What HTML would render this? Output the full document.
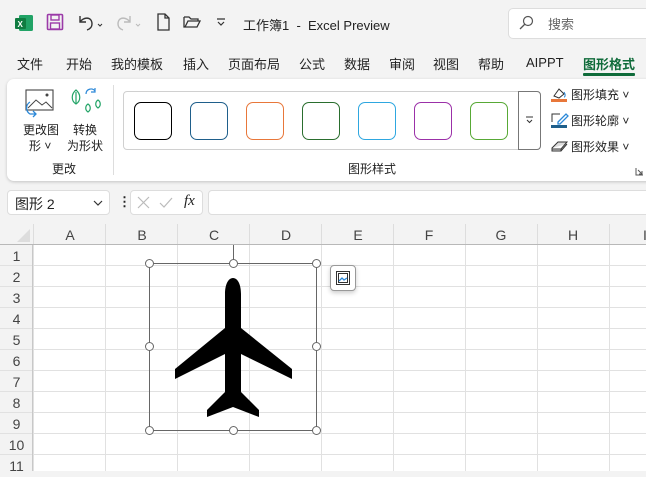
<!DOCTYPE html>
<html><head><meta charset="utf-8"><style>
*{margin:0;padding:0;box-sizing:border-box}
body{width:646px;height:471px;overflow:hidden;background:#f3f3f3;font-family:"Liberation Sans","Noto Sans CJK SC",sans-serif;color:#222;position:relative;font-size:13px}
.a{position:absolute;white-space:nowrap}
.tab{top:54px;font-size:13px}
.sb{position:absolute;top:102px;width:38px;height:38px;border-radius:7px;border:1.3px solid}
.col{position:absolute;top:225px;height:20px;font-size:14px;color:#444;text-align:center;width:72px;line-height:20px}
.row{position:absolute;left:0;width:33px;text-align:center;font-size:14px;color:#444;height:21px;line-height:21px}
.h{position:absolute;width:9px;height:9px;border-radius:50%;border:1.5px solid #666;background:#fff}
</style></head><body>
<svg class="a" style="left:14px;top:13px" width="20" height="20"><rect x="5" y="2" width="14" height="16" rx="1.5" fill="#21a366"/><rect x="1" y="5" width="11" height="11" rx="1" fill="#107c41"/><text x="3.5" y="14" font-size="8" fill="#fff" font-family="Liberation Sans" font-weight="bold">X</text></svg>
<svg class="a" style="left:46px;top:13px" width="18" height="18"><rect x="1.5" y="1.5" width="15" height="15" rx="1" fill="none" stroke="#9b3aa8" stroke-width="1.6"/><rect x="5" y="2" width="8" height="5" fill="none" stroke="#9b3aa8" stroke-width="1.4"/><rect x="4.5" y="10" width="9" height="6" fill="none" stroke="#9b3aa8" stroke-width="1.4"/></svg>
<svg class="a" style="left:76px;top:12px" width="30" height="20"><path d="M4 4v6h6M4 10c3-5 12-6 12 2 0 3-2 5-5 6" fill="none" stroke="#333" stroke-width="1.4"/><path d="M22 12l2 2 2-2" fill="none" stroke="#333"/></svg>
<svg class="a" style="left:114px;top:12px" width="30" height="20"><path d="M16 4v6h-6M16 10c-3-5-12-6-12 2 0 3 2 5 5 6" fill="none" stroke="#bbb" stroke-width="1.4"/><path d="M22 12l2 2 2-2" fill="none" stroke="#bbb"/></svg>
<svg class="a" style="left:156px;top:13px" width="16" height="18"><path d="M2 1h7l4 4v12H2z M9 1v4h4" fill="none" stroke="#333" stroke-width="1.3"/></svg>
<svg class="a" style="left:183px;top:15px" width="20" height="14"><path d="M1 2h5l2 2h7v2M1 2v10h13l3-6H5l-3 6" fill="none" stroke="#333" stroke-width="1.3"/></svg>
<svg class="a" style="left:215px;top:17px" width="12" height="10"><path d="M2 2h8M3 5l3 3 3-3" fill="none" stroke="#333" stroke-width="1.2"/></svg>
<div class="a" style="left:243px;top:15px;font-size:13px">工作簿1&nbsp; - &nbsp;Excel Preview</div>
<div class="a" style="left:508px;top:8px;width:150px;height:31px;background:#fff;border:1px solid #ddd;border-radius:5px"></div>
<svg class="a" style="left:518px;top:15px" width="16" height="16"><circle cx="10" cy="6" r="4.5" fill="none" stroke="#555" stroke-width="1.2"/><path d="M7 9l-5 5" stroke="#555" stroke-width="1.3"/></svg>
<div class="a" style="left:548px;top:14px;color:#666;font-size:13px">搜索</div>
<div class="a tab" style="left:17px">文件</div><div class="a tab" style="left:66px">开始</div><div class="a tab" style="left:111px">我的模板</div><div class="a tab" style="left:183px">插入</div><div class="a tab" style="left:228px">页面布局</div><div class="a tab" style="left:299px">公式</div><div class="a tab" style="left:344px">数据</div><div class="a tab" style="left:389px">审阅</div><div class="a tab" style="left:433px">视图</div><div class="a tab" style="left:478px">帮助</div><div class="a tab" style="left:526px;top:55px">AIPPT</div>
<div class="a tab" style="left:583px;color:#0f6b3a;font-weight:bold">图形格式</div>
<div class="a" style="left:583px;top:73px;width:52px;height:3px;background:#0f6b3a;border-radius:1px"></div>
<div class="a" style="left:7px;top:79px;width:660px;height:102px;background:#fff;border-radius:7px;box-shadow:0 1px 3px rgba(0,0,0,.2)"></div>
<svg class="a" style="left:22px;top:88px" width="36" height="32"><rect x="4" y="2" width="27" height="20" fill="none" stroke="#444" stroke-width="1.1"/><path d="M6 20l8-8 6 5 4-3 6 6" fill="none" stroke="#444"/><circle cx="25" cy="7" r="1.5" fill="#444"/><path d="M8 14a7 7 0 0 0 0 12h6M11 23l3 3-3 3" fill="none" stroke="#2b88d8" stroke-width="1.3"/></svg>
<div class="a" style="left:23px;top:121px;font-size:12px">更改图</div>
<div class="a" style="left:29px;top:137px;font-size:12px">形 ˅</div>
<svg class="a" style="left:68px;top:86px" width="36" height="32"><path d="M8 4c-5 4-5 11 0 14 5-3 5-10 0-14zM8 6v12" fill="none" stroke="#21a366" stroke-width="1.2"/><path d="M18 8a5 5 0 0 1 9-3M27 2v4h-4" fill="none" stroke="#2b88d8" stroke-width="1.2"/><path d="M20 18c-3 2-3 6 0 8 3-2 3-6 0-8zM30 14c-3 2-3 6 0 8 3-2 3-6 0-8z" fill="none" stroke="#21a366" stroke-width="1.2"/></svg>
<div class="a" style="left:73px;top:121px;font-size:12px">转换</div>
<div class="a" style="left:67px;top:137px;font-size:12px">为形状</div>
<div class="a" style="left:52px;top:160px;font-size:12px">更改</div>
<div class="a" style="left:113px;top:85px;width:1px;height:90px;background:#ddd"></div>
<div class="a" style="left:123px;top:91px;width:418px;height:59px;border:1px solid #d0d0d0;border-radius:4px"></div>
<div class="a" style="left:518px;top:91px;width:23px;height:59px;border:1px solid #777;border-radius:0 4px 4px 0;background:#fff"></div>
<svg class="a" style="left:524px;top:115px" width="12" height="10"><path d="M2 2h7M3 5l2.5 2.5L8 5" fill="none" stroke="#333"/></svg>
<div class="sb" style="left:134px;border-color:#000"></div><div class="sb" style="left:190px;border-color:#1f5f8b"></div><div class="sb" style="left:246px;border-color:#e8773a"></div><div class="sb" style="left:302px;border-color:#2a6e2e"></div><div class="sb" style="left:358px;border-color:#2ea7e0"></div><div class="sb" style="left:414px;border-color:#9b30a8"></div><div class="sb" style="left:470px;border-color:#58a936"></div>
<div class="a" style="left:348px;top:160px;font-size:12px">图形样式</div>
<svg class="a" style="left:550px;top:86px" width="20" height="18"><path d="M4 10l5-7 5 5-5 4z" fill="none" stroke="#333"/><path d="M14 6c2 3 1 5 0 5" fill="none" stroke="#2b88d8"/><rect x="1" y="13" width="16" height="3" fill="#e8773a"/></svg>
<div class="a" style="left:571px;top:86px;font-size:12px">图形填充 ˅</div>
<svg class="a" style="left:550px;top:111px" width="20" height="18"><path d="M2 11V3h8" fill="none" stroke="#333"/><path d="M8 11l8-8 2 2-8 8h-2z" fill="none" stroke="#2b88d8" stroke-width="1.3"/><rect x="1" y="14" width="16" height="3" fill="#1f5f8b"/></svg>
<div class="a" style="left:571px;top:112px;font-size:12px">图形轮廓 ˅</div>
<svg class="a" style="left:550px;top:138px" width="20" height="16"><path d="M2 10l6-6h9l-6 7H2zM2 10v3h9l6-7M11 11v2" fill="#ddd" stroke="#333"/></svg>
<div class="a" style="left:571px;top:138px;font-size:12px">图形效果 ˅</div>
<svg class="a" style="left:635px;top:167px" width="9" height="9"><path d="M1 1v7h7M3 3l4 4M7 4v3H4" fill="none" stroke="#555"/></svg>
<div class="a" style="left:7px;top:190px;width:103px;height:25px;background:#fff;border:1px solid #ddd;border-radius:4px"></div>
<div class="a" style="left:15px;top:194px;font-size:14px">图形 2</div>
<svg class="a" style="left:93px;top:199px" width="10" height="8"><path d="M1 2l4 4 4-4" fill="none" stroke="#333" stroke-width="1.2"/></svg>
<div class="a" style="left:118px;top:194px;font-weight:bold">⋮</div>
<div class="a" style="left:130px;top:190px;width:73px;height:25px;background:#fff;border:1px solid #ddd;border-radius:4px"></div>
<svg class="a" style="left:136px;top:195px" width="42" height="16"><path d="M2 2l11 11M13 2L2 13" stroke="#bbb" stroke-width="1.2"/><path d="M24 8l4 4 8-9" fill="none" stroke="#bbb" stroke-width="1.2"/></svg>
<div class="a" style="left:184px;top:193px;font-family:'Liberation Serif',serif;font-style:italic;font-size:15px">fx</div>
<div class="a" style="left:208px;top:190px;width:450px;height:25px;background:#fff;border:1px solid #ddd;border-radius:4px"></div>
<div class="a" style="left:0;top:245px;width:646px;height:226px;background:#fff;
background-image:linear-gradient(#e1e1e1 1px,transparent 1px),linear-gradient(90deg,#e1e1e1 1px,transparent 1px);background-size:72px 21px,72px 21px;background-position:0 20px,33px 0"></div>
<div class="a" style="left:0;top:245px;width:33px;height:226px;background:#f3f3f3;border-right:1px solid #c8c8c8;background-image:linear-gradient(#e1e1e1 1px,transparent 1px);background-size:33px 21px;background-position:0 20px"></div>
<div class="a" style="left:0;top:224px;width:646px;height:21px;background:#f3f3f3;border-bottom:1px solid #b8b8b8;background-image:linear-gradient(90deg,#ddd 1px,transparent 1px);background-size:72px 21px;background-position:33px 0"></div>
<svg class="a" style="left:16px;top:228px" width="15" height="15"><path d="M14 1v13H1z" fill="#ddd"/></svg>
<div class="col" style="left:34px">A</div><div class="col" style="left:106px">B</div><div class="col" style="left:178px">C</div><div class="col" style="left:250px">D</div><div class="col" style="left:322px">E</div><div class="col" style="left:393px">F</div><div class="col" style="left:465px">G</div><div class="col" style="left:537px">H</div><div class="col" style="left:609px">I</div>
<div class="row" style="top:246px">1</div><div class="row" style="top:267px">2</div><div class="row" style="top:288px">3</div><div class="row" style="top:309px">4</div><div class="row" style="top:330px">5</div><div class="row" style="top:351px">6</div><div class="row" style="top:372px">7</div><div class="row" style="top:393px">8</div><div class="row" style="top:414px">9</div><div class="row" style="top:435px">10</div><div class="row" style="top:456px">11</div>
<svg class="a" style="left:0;top:0" width="646" height="471">
<line x1="233.5" y1="245" x2="233.5" y2="263" stroke="#666"/>
<rect x="149.5" y="263.5" width="167" height="167" fill="none" stroke="#666"/>
<path d="M233 278c5 0 8 7 8 16v34l51 41v10l-51-25v38l18 18v7l-26-10-26 10v-7l18-18v-38l-50 25v-10l50-41v-34c0-9 3-16 8-16z" fill="#000"/>
</svg>
<div class="h" style="left:145px;top:259px"></div><div class="h" style="left:229px;top:259px"></div><div class="h" style="left:312px;top:259px"></div>
<div class="h" style="left:145px;top:342px"></div><div class="h" style="left:312px;top:342px"></div>
<div class="h" style="left:145px;top:426px"></div><div class="h" style="left:229px;top:426px"></div><div class="h" style="left:312px;top:426px"></div>
<div class="a" style="left:330px;top:265px;width:26px;height:26px;background:#fff;border:1px solid #999;border-radius:4px;box-shadow:0 2px 5px rgba(0,0,0,.2)"></div>
<svg class="a" style="left:335px;top:270px" width="16" height="16"><rect x="1.5" y="1.5" width="13" height="13" fill="none" stroke="#333"/><rect x="3.5" y="3.5" width="9" height="9" fill="none" stroke="#333"/><path d="M4 11l3-3 2 2 3-2" fill="none" stroke="#2b88d8" stroke-width="1.3"/></svg>
</body></html>
